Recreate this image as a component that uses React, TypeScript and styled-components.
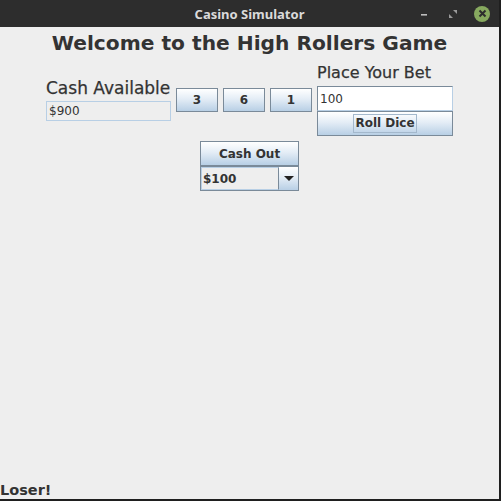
import React from 'react';
import styled, { createGlobalStyle } from 'styled-components';

const Global = createGlobalStyle`
  html, body { margin: 0; padding: 0; background: #eeeeee; }
  #root { width: 501px; height: 501px; }
`;

const Window = styled.div`
  width: 501px;
  height: 501px;
  box-sizing: border-box;
  display: flex;
  flex-direction: column;
  background: #eeeeee;
  border-right: 2px solid #1f1f1f;
  border-bottom: 2px solid #1f1f1f;
  font-family: "DejaVu Sans", sans-serif;
  color: #333333;
`;

const TitleBar = styled.div`
  height: 27px;
  flex: none;
  background: #2d2d2d;
  display: flex;
  align-items: center;
  justify-content: center;
  position: relative;
`;

const Title = styled.span`
  font-family: "Noto Sans", "DejaVu Sans", sans-serif;
  font-weight: 700;
  font-size: 13px;
  color: #dadada;
`;

const Controls = styled.div`
  position: absolute;
  right: 9px;
  top: 0;
  height: 27px;
  display: flex;
  align-items: center;
  gap: 14px;
`;

const Close = styled.div`
  width: 16px;
  height: 16px;
  border-radius: 50%;
  background: #87a95f;
  display: flex;
  align-items: center;
  justify-content: center;
`;

const Content = styled.div`
  flex: 1;
  display: flex;
  flex-direction: column;
  align-items: center;
  padding-top: 4px;
`;

const Heading = styled.h1`
  margin: 0;
  font-size: 20.2px;
  line-height: 24px;
  font-weight: 700;
`;

const BetRow = styled.div`
  margin-top: 8px;
  display: flex;
  align-items: center;
  gap: 5px;
`;

const Column = styled.div<{ $width: number }>`
  width: ${p => p.$width}px;
  display: flex;
  flex-direction: column;
`;

const Label = styled.div<{ $size: number }>`
  font-size: ${p => p.$size}px;
  line-height: ${p => p.$size + 3}px;
  white-space: nowrap;
  -webkit-text-stroke: 0.25px #333333;
`;

const Field = styled.div<{ $readOnly?: boolean }>`
  box-sizing: border-box;
  height: ${p => (p.$readOnly ? 20 : 25)}px;
  padding-left: 2px;
  display: flex;
  align-items: center;
  font-size: 12px;
  color: #333333;
  background: ${p => (p.$readOnly ? '#eeeeee' : '#ffffff')};
  border: 1px solid ${p => (p.$readOnly ? '#b8cfe5' : '#7a8a99')};
  ${p => (p.$readOnly ? '' : 'border-right-color: #b8cfe5; border-bottom-color: #b8cfe5;')}
`;

const MetalButton = styled.button<{ $width?: number; $height?: number }>`
  box-sizing: border-box;
  width: ${p => (p.$width ? `${p.$width}px` : '100%')};
  height: ${p => p.$height ?? 25}px;
  margin: 0;
  padding: 0;
  border: 1px solid #7a8a99;
  background: linear-gradient(to bottom, #ffffff 0%, #e4edf6 45%, #b8cfe5 100%);
  font-family: "DejaVu Sans", sans-serif;
  font-weight: 700;
  font-size: 12px;
  color: #333333;
  display: flex;
  align-items: center;
  justify-content: center;
`;

const Focus = styled.span`
  border: 1px solid #a3b8cc;
  padding: 1px 1px;
  line-height: 15px;
`;

const CashOutColumn = styled.div`
  margin-top: 5px;
  width: 99px;
  display: flex;
  flex-direction: column;
`;

const Combo = styled.div`
  box-sizing: border-box;
  height: 25px;
  display: flex;
  border: 1px solid #7a8a99;
  background: #eeeeee;
`;

const ComboValue = styled.div`
  flex: 1;
  box-sizing: border-box;
  border: 1px solid #b8cfe5;
  border-right: 1px solid #7a8a99;
  display: flex;
  align-items: center;
  padding-left: 1px;
  font-weight: 700;
  font-size: 12px;
`;

const ComboArrow = styled.div`
  width: 19px;
  display: flex;
  align-items: center;
  justify-content: center;
  background: linear-gradient(to bottom, #ffffff 0%, #e4edf6 45%, #b8cfe5 100%);
`;

const Status = styled.div`
  margin-top: auto;
  align-self: flex-start;
  font-weight: 700;
  font-size: 14.5px;
  line-height: 17px;
`;

export default function App() {
  return (
    <>
      <Global />
      <Window>
        <TitleBar>
          <Title>Casino Simulator</Title>
          <Controls>
            <svg width="14" height="14" viewBox="0 0 14 14">
              <rect x="3" y="7" width="6" height="1.6" fill="#bdbdbd" />
            </svg>
            <svg width="14" height="14" viewBox="0 0 14 14">
              <path d="M7 3 L11 3 L11 7 Z M3 7 L3 11 L7 11 Z" fill="#9a9a9a" />
            </svg>
            <Close>
              <svg width="9" height="9" viewBox="0 0 9 9">
                <path d="M1.5 1.5 L7.5 7.5 M7.5 1.5 L1.5 7.5" stroke="#2d2d2d" strokeWidth="2" />
              </svg>
            </Close>
          </Controls>
        </TitleBar>
        <Content>
          <Heading>Welcome to the High Rollers Game</Heading>
          <BetRow>
            <Column $width={125}>
              <Label $size={17}>Cash Available</Label>
              <Field $readOnly style={{ marginTop: 3 }}>$900</Field>
            </Column>
            {[3, 6, 1].map((d, i) => (
              <MetalButton key={i} $width={42} $height={24}>{d}</MetalButton>
            ))}
            <Column $width={136}>
              <Label $size={16}>Place Your Bet</Label>
              <Field style={{ marginTop: 4 }}>100</Field>
              <MetalButton>
                <Focus>Roll Dice</Focus>
              </MetalButton>
            </Column>
          </BetRow>
          <CashOutColumn>
            <MetalButton>Cash Out</MetalButton>
            <Combo>
              <ComboValue>$100</ComboValue>
              <ComboArrow>
                <svg width="10" height="6" viewBox="0 0 10 6">
                  <path d="M0 0 L10 0 L5 5 Z" fill="#222" />
                </svg>
              </ComboArrow>
            </Combo>
          </CashOutColumn>
          <Status>Loser!</Status>
        </Content>
      </Window>
    </>
  );
}
